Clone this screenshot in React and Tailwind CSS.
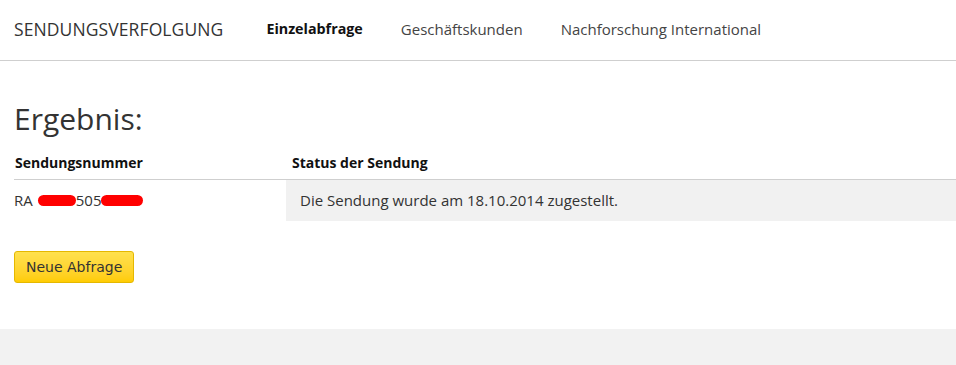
import React from "react";

const navItems = [
  { label: "Einzelabfrage", active: true },
  { label: "Geschäftskunden" },
  { label: "Nachforschung International" },
];

const Redacted = ({ className }) => (
  <span className={`inline-block h-[11px] rounded-full bg-[#ff0000] align-middle ${className}`} />
);

export default function App() {
  return (
    <div className="min-h-[365px] bg-white font-['Open_Sans',sans-serif] text-[#333]">
      {/* header */}
      <header className="flex h-[61px] items-center border-b border-[#cfcfcf] pb-[1px] pl-[14px]">
        <div className="text-[17.5px] tracking-[0.1px] text-[#333]">SENDUNGSVERFOLGUNG</div>
        <nav className="ml-[43px] flex gap-[38px] text-[15px]">
          {navItems.map((item) => (
            <a
              key={item.label}
              className={item.active ? "text-[14.3px] font-bold text-[#111]" : "text-[#444]"}
            >
              {item.label}
            </a>
          ))}
        </nav>
      </header>

      <main className="pl-[14px] pt-[38px]">
        <h1 className="text-[30px] leading-[40px] text-[#333]">Ergebnis:</h1>

        {/* result table */}
        <div className="mt-[13px]">
          <div className="flex border-b border-[#cfcfcf] pb-[6px] text-[14px] font-bold text-[#111]">
            <div className="w-[272px] pl-[1px]">Sendungsnummer</div>
            <div className="pl-[6px]">Status der Sendung</div>
          </div>
          <div className="flex h-[41px] items-center text-[15px]">
            <div className="flex w-[272px] items-center">
              RA
              <Redacted className="ml-[5px] w-[38px]" />
              <span>505</span>
              <Redacted className="w-[42px]" />
            </div>
            <div className="flex h-full flex-1 items-center bg-[#f1f1f1] pl-[14px] text-[#333]">
              Die Sendung wurde am 18.10.2014 zugestellt.
            </div>
          </div>
        </div>

        <button className="mt-[30px] h-[32px] rounded-[3px] border border-[#e5b800] bg-gradient-to-b from-[#ffe14d] to-[#ffcc00] px-[11px] font-['DejaVu_Sans',sans-serif] text-[14px] text-[#333]">
          Neue Abfrage
        </button>
      </main>

      <footer className="mt-[46px] h-[40px] bg-[#f2f2f2]" />
    </div>
  );
}
